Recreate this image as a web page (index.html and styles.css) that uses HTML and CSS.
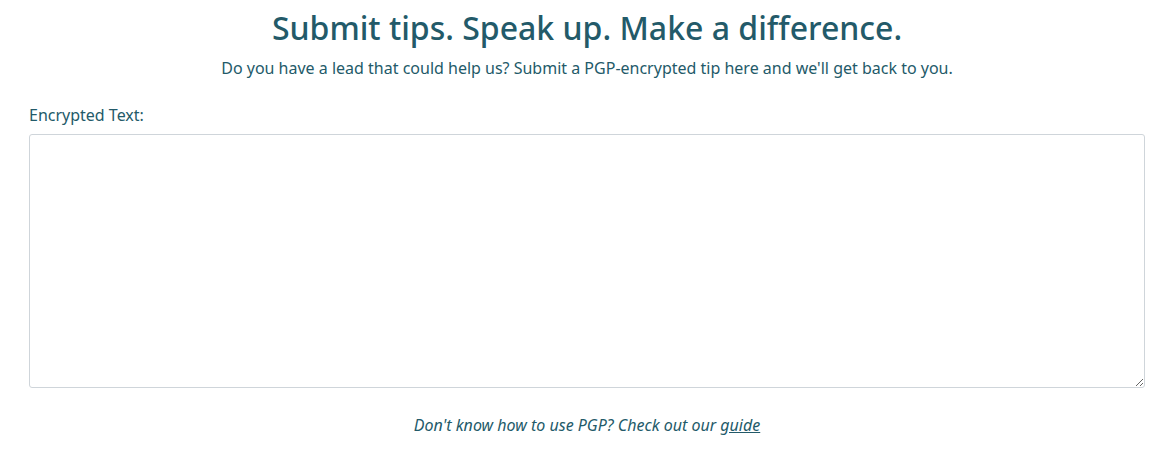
FILE: index.html
```html
<!DOCTYPE html>
<html lang="en">
<head>
<meta charset="utf-8">
<title>Submit tips</title>
<link rel="stylesheet" href="styles.css">
</head>
<body>
<main class="page">
  <header class="hero">
    <h1 class="title">Submit tips. Speak up. Make a difference.</h1>
    <p class="lead">Do you have a lead that could help us? Submit a PGP-encrypted tip here and we'll get back to you.</p>
  </header>
  <form class="tip-form">
    <label class="label" for="enc">Encrypted Text:</label>
    <textarea id="enc" class="field"></textarea>
  </form>
  <p class="help">Don't know how to use PGP? Check out our <a class="link" href="#">guide</a></p>
</main>
</body>
</html>
```
FILE: styles.css
```css
html, body {
  margin: 0;
  padding: 0;
  background: #ffffff;
}
body {
  font-family: "Noto Sans", "Open Sans", sans-serif;
  color: #235a69;
}
.page {
  padding: 0 26px 0 29px;
}
.hero {
  text-align: center;
  padding-top: 8px;
}
.title {
  margin: 0;
  font-size: 32px;
  font-weight: 500;
  line-height: 40px;
  color: #235a69;
}
.lead {
  margin: 8px 0 0;
  font-size: 16px;
  line-height: 24px;
}
.tip-form {
  display: flex;
  flex-direction: column;
  margin-top: 23px;
}
.label {
  font-size: 16px;
  line-height: 24px;
  margin-bottom: 7px;
}
.field {
  box-sizing: border-box;
  height: 254px;
  width: 100%;
  border: 1px solid #cfd5da;
  border-radius: 3px;
  resize: vertical;
  margin: 0;
  font-family: inherit;
}
.help {
  text-align: center;
  font-style: italic;
  font-size: 16px;
  line-height: 24px;
  margin: 25px 0 0;
}
.link {
  color: inherit;
}
```
